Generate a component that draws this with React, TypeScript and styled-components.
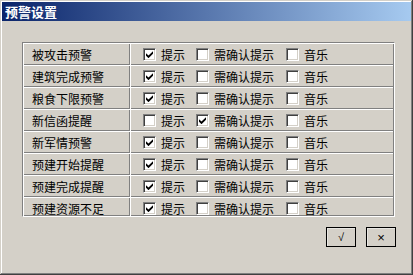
import styled, { createGlobalStyle } from 'styled-components';

const GlobalStyle = createGlobalStyle`
  html, body {
    margin: 0;
    padding: 0;
    background: #d4d0c8;
  }
`;

type Alert = {
  label: string;
  notify: boolean;
  confirm: boolean;
  music: boolean;
};

const alerts: Alert[] = [
  { label: '被攻击预警', notify: true, confirm: false, music: false },
  { label: '建筑完成预警', notify: true, confirm: false, music: false },
  { label: '粮食下限预警', notify: true, confirm: false, music: false },
  { label: '新信函提醒', notify: false, confirm: true, music: false },
  { label: '新军情预警', notify: true, confirm: false, music: false },
  { label: '预建开始提醒', notify: true, confirm: false, music: false },
  { label: '预建完成提醒', notify: true, confirm: false, music: false },
  { label: '预建资源不足', notify: true, confirm: false, music: false },
];

const CheckBox = ({ checked }: { checked: boolean }) => (
  <Box>
    {checked && (
      <svg width="7" height="7" viewBox="0 0 7 7">
        <polygon points="0,2.2 2.5,4.6 7,0.2 7,2.8 2.5,7.2 0,4.8" fill="#000" />
      </svg>
    )}
  </Box>
);

export default function App() {
  return (
    <>
      <GlobalStyle />
      <Window>
        <TitleBar>预警设置</TitleBar>
        <Body>
          <Table>
            {alerts.map(a => (
              <Row key={a.label}>
                <Label>{a.label}</Label>
                <Options>
                  <Option>
                    <CheckBox checked={a.notify} />
                    <span>提示</span>
                  </Option>
                  <Option>
                    <CheckBox checked={a.confirm} />
                    <span>需确认提示</span>
                  </Option>
                  <Option>
                    <CheckBox checked={a.music} />
                    <span>音乐</span>
                  </Option>
                </Options>
              </Row>
            ))}
          </Table>
          <ButtonRow>
            <Button>√</Button>
            <Button $glyph={13}>×</Button>
          </ButtonRow>
        </Body>
      </Window>
    </>
  );
}

const Window = styled.div`
  width: 413px;
  height: 275px;
  box-sizing: border-box;
  padding: 2px;
  background: #d4d0c8;
  box-shadow:
    inset -1px -1px #404040,
    inset 1px 1px #d4d0c8,
    inset -2px -2px #808080,
    inset 2px 2px #ffffff;
  font-family: "Noto Sans CJK SC", "DejaVu Sans", sans-serif;
  font-size: 12px;
  color: #000;
  display: flex;
  flex-direction: column;
`;

const TitleBar = styled.div`
  height: 19px;
  padding-left: 3px;
  display: flex;
  align-items: center;
  background: linear-gradient(to right, #0a246a, #a6caf0);
  color: #fff;
  font-weight: bold;
  font-size: 13px;
`;

const Body = styled.div`
  padding: 21px 0 0 20px;
  display: flex;
  flex-direction: column;
`;

const Table = styled.div`
  width: 373px;
  height: 175px;
  box-sizing: border-box;
  border-top: 1px solid #808080;
  border-left: 1px solid #808080;
  border-bottom: 1px solid #ffffff;
  border-right: 1px solid #ffffff;
  box-shadow: inset 1px 1px #ffffff, inset -1px -1px #808080;
  padding: 1px;
  overflow: hidden;
`;

const Row = styled.div`
  height: 22px;
  flex: none;
  box-sizing: border-box;
  display: flex;
  border-bottom: 1px solid #ffffff;
  box-shadow: inset 0 -1px #808080;
`;

const Label = styled.div`
  width: 107px;
  box-sizing: border-box;
  padding-left: 8px;
  display: flex;
  align-items: center;
  border-right: 1px solid #ffffff;
  box-shadow: inset -1px 0 #808080;
`;

const Options = styled.div`
  flex: 1;
  padding-left: 12px;
  display: grid;
  grid-template-columns: 53px 90px auto;
  align-items: center;
`;

const Option = styled.div`
  display: flex;
  align-items: center;
  gap: 5px;
`;

const Box = styled.div`
  width: 13px;
  height: 13px;
  box-sizing: border-box;
  background: #ffffff;
  border-top: 1px solid #808080;
  border-left: 1px solid #808080;
  border-bottom: 1px solid #ffffff;
  border-right: 1px solid #ffffff;
  box-shadow: inset 1px 1px #404040, inset -1px -1px #d4d0c8;
  display: flex;
  align-items: center;
  justify-content: center;
`;

const ButtonRow = styled.div`
  width: 374px;
  margin-top: 10px;
  display: flex;
  justify-content: flex-end;
  gap: 10px;
`;

const Button = styled.div<{ $glyph?: number }>`
  width: 30px;
  height: 20px;
  box-sizing: border-box;
  border: 1px solid #000;
  box-shadow: inset 1px 1px #e8e6e2;
  display: flex;
  align-items: center;
  justify-content: center;
  font-family: "Liberation Sans", sans-serif;
  font-size: ${p => p.$glyph ?? 11}px;
  font-weight: 300;
`;
